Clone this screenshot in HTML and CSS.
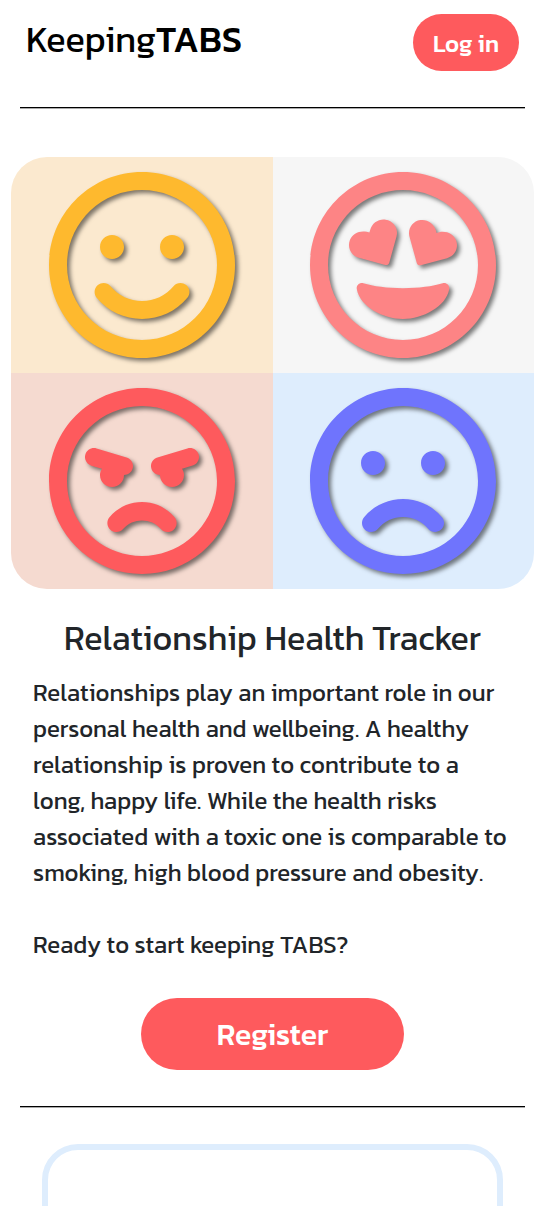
FILE: index.html
```
<!DOCTYPE html>
<html lang="en">
<head>
<meta charset="utf-8">
<meta name="viewport" content="width=device-width, initial-scale=1">
<title>KeepingTABS</title>
<link rel="stylesheet" href="styles.css">
</head>
<body>
<header class="header">
  <a class="brand" href="#">Keeping<span class="brand-strong">TABS</span></a>
  <button class="button login" type="button">Log in</button>
</header>
<hr class="rule">
<main>
  <section class="moods" aria-label="Moods">
    <div class="mood happy">
      <svg class="face" viewBox="0 0 496 512" role="img" aria-label="Happy"><path d="M248 8C111 8 0 119 0 256s111 248 248 248 248-111 248-248S385 8 248 8zm0 448c-110.300 0-200-89.700-200-200S137.700 56 248 56s200 89.700 200 200-89.700 200-200 200zm-80-216c17.700 0 32-14.300 32-32s-14.300-32-32-32-32 14.300-32 32 14.300 32 32 32zm160 0c17.700 0 32-14.300 32-32s-14.300-32-32-32-32 14.300-32 32 14.300 32 32 32zm4 72.600c-20.800 25-51.500 39.400-84 39.400s-63.200-14.300-84-39.400c-8.500-10.200-23.700-11.500-33.800-3.100-10.200 8.500-11.500 23.600-3.100 33.800 30 36 74.100 56.600 120.900 56.600s90.900-20.600 120.900-56.600c8.500-10.200 7.100-25.300-3.100-33.800-10.100-8.400-25.300-7.100-33.800 3.100z"/></svg>
    </div>
    <div class="mood loving">
      <svg class="face" viewBox="0 0 496 512" role="img" aria-label="Loving"><path d="M248 8C111 8 0 119 0 256s111 248 248 248 248-111 248-248S385 8 248 8zm0 448c-110.300 0-200-89.700-200-200S137.700 56 248 56s200 89.700 200 200-89.700 200-200 200z"/><path d="M353.600 304.600c-25.900 8.300-64.400 13.100-105.600 13.100s-79.600-4.800-105.600-13.100c-9.800-3.100-19.400 5.300-17.700 15.300 7.900 47.200 71.300 80 123.300 80s115.300-32.900 123.300-80c1.600-9.800-7.700-18.400-17.700-15.300zm-152.800-48.900c4.500 1.200 9.200-1.500 10.500-6l19.400-69.900c5.600-20.300-7.400-41.100-28.800-44.500-18.600-3-36.400 8.800-41.500 27.100l-2 7.100-7.100-1.900c-18.200-4.700-38.200 4.300-44.900 22-7.700 20.200 3.800 41.900 24.200 47.200l70 18.900zm188.800-65.300c-6.700-17.600-26.700-26.700-44.900-21.900l-7.100 1.900-2-7.100c-5-18.100-22.800-30.100-41.500-27.100-21.400 3.400-34.400 24.200-28.800 44.500l19.400 69.900c1.200 4.500 5.900 7.200 10.500 6l70.200-18.900c20.400-5.300 31.900-26.900 24.200-47.300z"/></svg>
    </div>
    <div class="mood angry">
      <svg class="face" viewBox="0 0 496 512" role="img" aria-label="Angry"><path d="M248 8C111 8 0 119 0 256s111 248 248 248 248-111 248-248S385 8 248 8zm0 448c-110.300 0-200-89.700-200-200S137.700 56 248 56s200 89.700 200 200-89.700 200-200 200zm0-144c-33.600 0-65.200 14.800-86.800 40.600-8.500 10.200-7.100 25.300 3.100 33.800s25.300 7.200 33.800-3c24.800-29.700 75-29.700 99.800 0 8.100 9.700 23.200 11.900 33.800 3 10.200-8.500 11.500-23.600 3.100-33.800-21.600-25.800-53.200-40.600-86.800-40.600zm-48-72c10.300 0 19.900-6.700 23-17.100 3.800-12.700-3.400-26.100-16.100-29.900l-80-24c-12.800-3.900-26.100 3.400-29.900 16.100-3.800 12.700 3.400 26.100 16.100 29.900l28.200 8.500c-3.100 4.900-5.300 10.400-5.300 16.600 0 17.700 14.300 32 32 32s32-14.400 32-32.100zm199-54.900c-3.800-12.700-17.100-19.900-29.900-16.100l-80 24c-12.700 3.800-19.900 17.200-16.100 29.900 3.100 10.400 12.700 17.100 23 17.100 0 17.700 14.300 32 32 32s32-14.300 32-32c0-6.200-2.200-11.700-5.300-16.600l28.200-8.500c12.700-3.700 19.900-17.100 16.100-29.800z"/></svg>
    </div>
    <div class="mood sad">
      <svg class="face" viewBox="0 0 496 512" role="img" aria-label="Sad"><path d="M248 8C111 8 0 119 0 256s111 248 248 248 248-111 248-248S385 8 248 8zm0 448c-110.300 0-200-89.700-200-200S137.700 56 248 56s200 89.700 200 200-89.700 200-200 200zm-80-216c17.700 0 32-14.300 32-32s-14.300-32-32-32-32 14.300-32 32 14.300 32 32 32zm160-64c-17.700 0-32 14.300-32 32s14.300 32 32 32 32-14.300 32-32-14.300-32-32-32zm-80 128c-40.200 0-78 17.700-103.800 48.600-8.500 10.200-7.100 25.300 3.100 33.800 10.200 8.400 25.300 7.100 33.800-3.100 16.600-19.900 41-31.400 66.900-31.400s50.300 11.400 66.900 31.400c4.800 5.700 11.600 8.600 18.500 8.600 5.400 0 10.900-1.800 15.400-5.600 10.200-8.500 11.500-23.600 3.100-33.800C326 321.700 288.200 304 248 304z"/></svg>
    </div>
  </section>
  <section class="intro">
    <h1 class="title">Relationship Health Tracker</h1>
    <p class="text">Relationships play an important role in our personal health and wellbeing. A healthy relationship is proven to contribute to a long, happy life. While the health risks associated with a toxic one is comparable to smoking, high blood pressure and obesity.</p>
    <p class="text">Ready to start keeping TABS?</p>
    <button class="button register" type="button">Register</button>
  </section>
  <hr class="rule">
  <section class="card"></section>
</main>
</body>
</html>
```
FILE: styles.css
```
* { box-sizing: border-box; }
html { background: #fff; }
body {
  margin: 0;
  padding-right: 3px;
  font-family: Kanit, Roboto, "Noto Sans", sans-serif;
  font-weight: 400;
  color: #212529;
}
.header {
  display: flex;
  justify-content: space-between;
  align-items: flex-start;
  padding: 14px 26px 36px;
}
.brand {
  color: #000;
  font-size: 36px;
  line-height: 50px;
  text-decoration: none;
}
.brand-strong { font-weight: 500; }
.button {
  padding: 0;
  border: 0;
  border-radius: 36px;
  background: #fe5a5d;
  color: #fff;
  font-family: inherit;
  font-weight: 500;
  cursor: pointer;
}
.login {
  padding: 2px 20px 0;
  font-size: 24px;
  line-height: 55px;
}
.rule {
  height: 2px;
  margin: 0 20px;
  border: 0;
  border-bottom: 1px solid #aaa;
  background: #000;
}
.moods {
  display: grid;
  grid-template-columns: 1fr 1fr;
  margin: 48px 11px 0;
  border-radius: 36px;
  overflow: hidden;
}
.mood {
  display: flex;
  justify-content: center;
  padding: 12px;
}
.face {
  width: 186px;
  height: 192px;
  fill: currentColor;
  overflow: visible;
  filter: drop-shadow(3px 3px 2px rgba(0, 0, 0, 0.5));
}
.happy { background: #fbe9cf; color: #feb92e; }
.loving { background: #f6f6f6; color: #fd8485; }
.angry { background: #f5dad0; color: #fe5a5d; }
.sad { background: #deedfd; color: #6f74fd; }
.intro { padding: 28px 33px 36px; }
.title {
  margin: 0 0 16px;
  font-size: 34px;
  line-height: 42px;
  font-weight: 400;
  text-align: center;
}
.text {
  margin: 0;
  font-size: 24px;
  line-height: 36px;
}
.text + .text { margin-top: 36px; }
.register {
  display: block;
  width: 55%;
  margin: 35px auto 0;
  padding-top: 2px;
  font-size: 30px;
  line-height: 70px;
}
.card {
  min-height: 240px;
  margin: 36px 42px 0;
  border: 6px solid #deedfd;
  border-radius: 36px;
}
```
